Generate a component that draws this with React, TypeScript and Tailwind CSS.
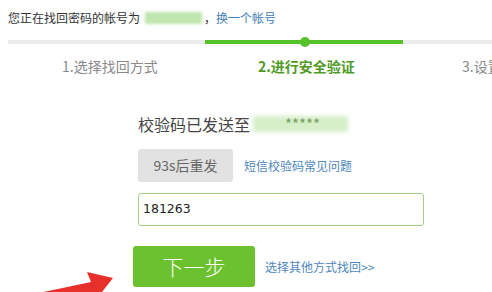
import React from 'react';

export default function App() {
  return (
    <div className="relative w-[492px] h-[292px] overflow-hidden bg-white font-['Noto_Sans_CJK_SC',sans-serif] text-[#333]">
      {/* account line */}
      <div className="flex items-center pl-2 pt-[10px] text-[12px] leading-4">
        <span>您正在找回密码的帐号为</span>
        <span className="ml-[5px] w-[57px] h-[12px] bg-[#bfe6ae] blur-[1.5px]" />
        <span className="ml-[2px]">，</span>
        <a className="text-[#3f7fb8]">换一个帐号</a>
      </div>

      {/* progress bar */}
      <div className="mt-[14px] ml-2 flex h-[4px]">
        <div className="w-[197px] shrink-0 bg-[#ececec]" />
        <div className="relative w-[198px] shrink-0 bg-[#55c22a]">
          <span className="absolute left-[95px] top-[-3px] w-[10px] h-[10px] rounded-full bg-[#55c22a]" />
        </div>
        <div className="flex-1 bg-[#ececec]" />
      </div>

      {/* steps */}
      <div className="mt-3 flex pl-[62px] text-[14px] leading-5 whitespace-nowrap">
        <div className="w-[196px] shrink-0 text-[#8a8a8a]">1.选择找回方式</div>
        <div className="w-[204px] shrink-0 font-bold text-[#4f9a25]">2.进行安全验证</div>
        <div className="shrink-0 text-[#8a8a8a]">3.设置新密码</div>
      </div>

      {/* form */}
      <div className="pl-[138px] mt-[37px]">
        <div className="flex items-center text-[16px] leading-[22px] text-[#444]">
          <span>校验码已发送至</span>
          <span className="relative ml-[3px] flex items-center w-[95px] h-[16px]">
            <span className="absolute inset-0 bg-[#d6efc9] blur-[2px]" />
            <span className="relative ml-[32px] text-[15px] leading-4 text-[#7aa060]">*****</span>
          </span>
        </div>

        <div className="mt-[14px] flex items-center">
          <button className="w-[95px] h-[33px] rounded-[3px] bg-[#e2e2e2] text-[14px] text-[#666]">93s后重发</button>
          <a className="ml-[11px] text-[12px] text-[#4d87bd]">短信校验码常见问题</a>
        </div>

        <div className="mt-[11px] w-[286px] h-[33px] rounded-[3px] border border-[#a3cf85] flex items-center pl-[4px] font-['DejaVu_Sans',sans-serif] text-[12.5px] text-[#222]">
          181263
        </div>

        <div className="mt-5 -ml-[5px] flex items-center">
          <button className="w-[122px] h-[41px] rounded-[3px] bg-[#6cc22e] text-[21px] font-light text-white">下一步</button>
          <a className="ml-[10px] text-[12px] text-[#4d87bd]">选择其他方式找回&gt;&gt;</a>
        </div>
      </div>

      {/* red arrow */}
      <svg className="absolute left-0 top-0" width="492" height="292" viewBox="0 0 492 292">
        <polygon points="113,278 87,272 91,282 34,294 38,304 95,292 98,297" fill="#e8302a" />
      </svg>
    </div>
  );
}
